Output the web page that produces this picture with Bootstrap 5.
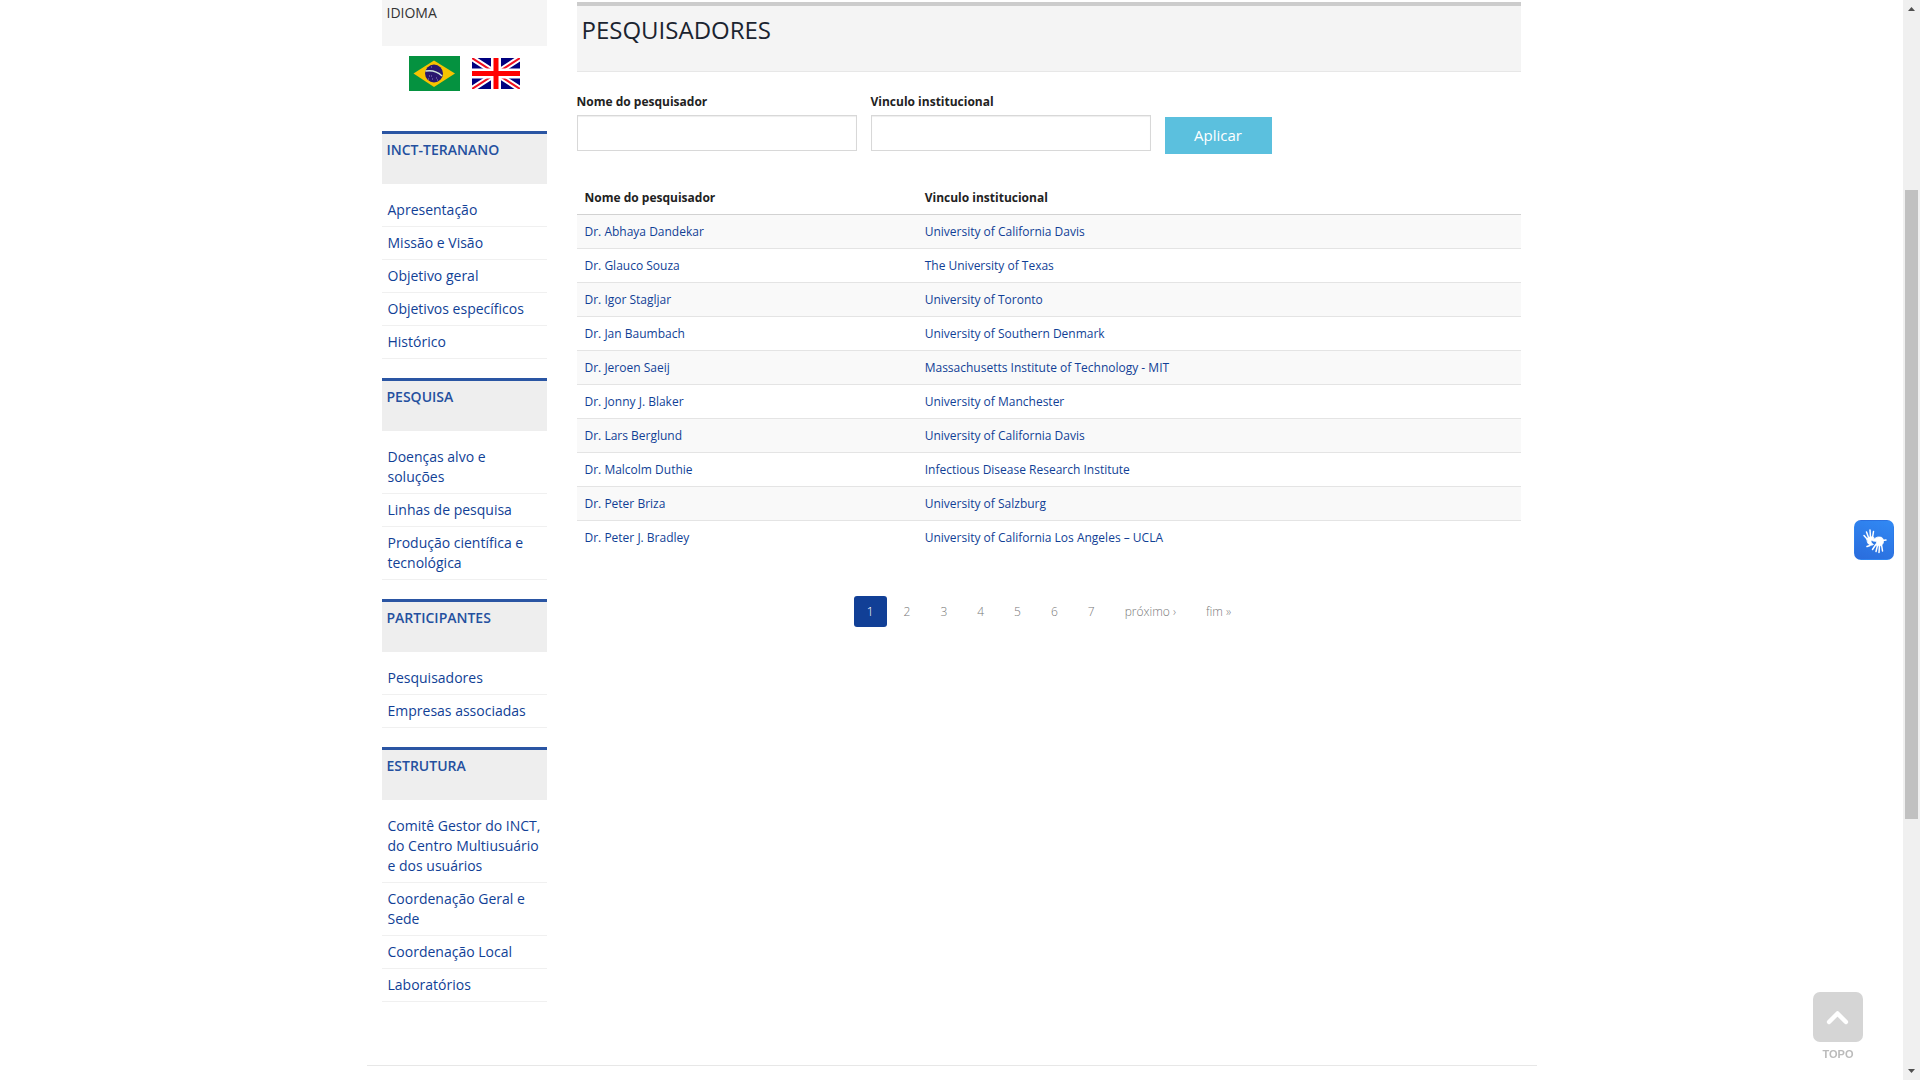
<!DOCTYPE html>
<html lang="pt-BR">
<head>
<meta charset="utf-8">
<meta name="viewport" content="width=device-width, initial-scale=1">
<title>Pesquisadores | INCT-TeraNano</title>
<link href="https://cdn.jsdelivr.net/npm/bootstrap@5.3.0/dist/css/bootstrap.min.css" rel="stylesheet">
<style>
  :root { --brand: #113f96; }
  html { overflow: hidden; }
  body { font-family: "Open Sans", sans-serif; font-size: 12px; line-height: 17px; color: #222; padding-right: 17px; }
  a { color: var(--brand); text-decoration: none; }
  .site-wrap { max-width: 1170px; border-bottom: 1px solid #e7e7e7; padding-bottom: 63px; }
  .side-col { flex: 0 0 195px; padding: 0 15px; }
  .main-col { min-width: 0; padding: 2px 15px 0; }
  .lang-head { background: #f5f5f5; height: 46px; padding: 3px 5px; font-size: 14px; line-height: 20px; font-weight: 400; color: #333; }
  .flag-row { gap: 12px; padding-top: 10px; margin-bottom: 40px; }
  .side-head { background: #eee; border-top: 3px solid #2a55a3; height: 53px; padding: 6px 5px; font-size: 14px; line-height: 20px; font-weight: 600; color: #24509f; }
  .side-menu { padding-top: 10px; margin-bottom: 19px; font-size: 14px; line-height: 20px; }
  .side-menu li { border-bottom: 1px solid #f0f0f0; }
  .side-menu a { display: block; padding: 6px 5px 6px 6px; }
  .page-title { background: #f4f4f4; border-top: 4px solid #ccc; border-bottom: 1px solid #e7e7e7; height: 70px; padding: 8px 5px; font-size: 24px; line-height: 32px; font-weight: 400; color: #1b2430; }
  .filter-form { gap: 14px; padding-top: 22px; margin-bottom: 27px; }
  .filter-form label { font-weight: 700; line-height: 16px; margin-bottom: 5px; }
  .filter-form .form-control { width: 280px; height: 36px; border: 1px solid #d8d8d8; border-radius: 0; box-shadow: inset 0 1px 1px #eee; }
  .apply-btn { width: 107px; height: 37px; margin-top: 23px; border-radius: 0; background: #5bc0de; color: #fff; font-size: 15px; line-height: 20px; padding: 0 0 2px; }
  .people { --bs-table-striped-bg: #f9f9f9; margin-bottom: 41px; table-layout: fixed; }
  .people th, .people td { padding: 8px; border-bottom: 1px solid #e4e4e4; color: #222; }
  .people thead th { border-bottom-color: #d2d2d2; font-weight: 700; }
  .people tbody tr:last-child td { border-bottom-color: transparent; }
  .people th:first-child { width: 36%; }
  .pager { gap: 5px; }
  .pager .page-link { border: 0; border-radius: 3px; padding: 7px 13px; font-size: 12px; line-height: 17px; font-weight: 300; color: #777; background: none; }
  .pager .active .page-link { background: var(--brand); color: #fff; border-radius: 3px; }
  .libras-btn { right: 26px; top: 520px; width: 40px; height: 40px; border-radius: 7px; background: linear-gradient(200deg, #3189f4, #2a6cdc); padding: 0; }
  .to-top { right: 57px; bottom: 18px; width: 50px; font: 700 11px/16px "Liberation Sans", sans-serif; color: #bbb; }
  .to-top-box { width: 50px; height: 50px; border-radius: 7px; background: #d5d5d5; }
  .scroll-rail { width: 17px; background: #f0f0f0; }
  .scroll-thumb { left: 2px; right: 2px; top: 17.6%; height: 58.2%; background: #c1c1c1; }
</style>
<script src="https://cdn.jsdelivr.net/npm/bootstrap@5.3.0/dist/js/bootstrap.bundle.min.js"></script>
</head>
<body>
<div class="site-wrap d-flex mx-auto">
  <aside class="side-col">
    <h2 class="lang-head m-0">IDIOMA</h2>
    <div class="flag-row d-flex justify-content-center align-items-center">
      <a href="#" aria-label="Português"><svg class="d-block" width="51" height="35" viewBox="0 0 51 35"><path fill="#059240" d="M0 0h51v35H0z"/><path fill="#f8c300" d="M4.500 17.500 25 4.500l21 13-21 13.500z"/><circle cx="25" cy="17.500" r="9" fill="#29166f"/><path d="M16.500 15c6-1 12 .5 16.500 5" fill="none" stroke="#cfe5dc" stroke-width="1.500"/><path d="M20 20h1m2 3h1m3-1h1m-9 1h1m8 1h1m-7-4h1m-1-9h1" stroke="#8f86bb"/></svg></a>
      <a href="#" aria-label="English"><svg class="d-block" width="48" height="31" viewBox="0 0 48 31"><path fill="#00007f" d="M0 0h48v31H0z"/><path d="M0 0l48 31M48 0 0 31" stroke="#fff" stroke-width="6"/><path d="M0 0l48 31M48 0 0 31" stroke="#f01020" stroke-width="2"/><path d="M24 0v31M0 15.500h48" stroke="#fff" stroke-width="10"/><path d="M24 0v31M0 15.500h48" stroke="#f00" stroke-width="5"/></svg></a>
    </div>

    <h2 class="side-head m-0">INCT-TERANANO</h2>
    <ul class="side-menu list-unstyled">
      <li><a href="#">Apresentação</a></li>
      <li><a href="#">Missão e Visão</a></li>
      <li><a href="#">Objetivo geral</a></li>
      <li><a href="#">Objetivos específicos</a></li>
      <li><a href="#">Histórico</a></li>
    </ul>
    <h2 class="side-head m-0">PESQUISA</h2>
    <ul class="side-menu list-unstyled">
      <li><a href="#">Doenças alvo e soluções</a></li>
      <li><a href="#">Linhas de pesquisa</a></li>
      <li><a href="#">Produção científica e tecnológica</a></li>
    </ul>
    <h2 class="side-head m-0">PARTICIPANTES</h2>
    <ul class="side-menu list-unstyled">
      <li><a href="#">Pesquisadores</a></li>
      <li><a href="#">Empresas associadas</a></li>
    </ul>
    <h2 class="side-head m-0">ESTRUTURA</h2>
    <ul class="side-menu list-unstyled mb-0">
      <li><a href="#">Comitê Gestor do INCT, do Centro Multiusuário e dos usuários</a></li>
      <li><a href="#">Coordenação Geral e Sede</a></li>
      <li><a href="#">Coordenação Local</a></li>
      <li><a href="#">Laboratórios</a></li>
    </ul>
  </aside>

  <main class="main-col flex-grow-1">
    <h1 class="page-title m-0">PESQUISADORES</h1>
    <form class="filter-form d-flex align-items-start">
      <div><label class="d-block" for="nome">Nome do pesquisador</label><input class="form-control" type="text" id="nome"></div>
      <div><label class="d-block" for="vinculo">Vinculo institucional</label><input class="form-control" type="text" id="vinculo"></div>
      <button type="button" class="btn apply-btn">Aplicar</button>
    </form>
    <table class="table table-striped people">
      <thead><tr><th scope="col">Nome do pesquisador</th><th scope="col">Vinculo institucional</th></tr></thead>
      <tbody>
        <tr><td><a href="#">Dr. Abhaya Dandekar</a></td><td><a href="#">University of California Davis</a></td></tr>
        <tr><td><a href="#">Dr. Glauco Souza</a></td><td><a href="#">The University of Texas</a></td></tr>
        <tr><td><a href="#">Dr. Igor Stagljar</a></td><td><a href="#">University of Toronto</a></td></tr>
        <tr><td><a href="#">Dr. Jan Baumbach</a></td><td><a href="#">University of Southern Denmark</a></td></tr>
        <tr><td><a href="#">Dr. Jeroen Saeij</a></td><td><a href="#">Massachusetts Institute of Technology - MIT</a></td></tr>
        <tr><td><a href="#">Dr. Jonny J. Blaker</a></td><td><a href="#">University of Manchester</a></td></tr>
        <tr><td><a href="#">Dr. Lars Berglund</a></td><td><a href="#">University of California Davis</a></td></tr>
        <tr><td><a href="#">Dr. Malcolm Duthie</a></td><td><a href="#">Infectious Disease Research Institute</a></td></tr>
        <tr><td><a href="#">Dr. Peter Briza</a></td><td><a href="#">University of Salzburg</a></td></tr>
        <tr><td><a href="#">Dr. Peter J. Bradley</a></td><td><a href="#">University of California Los Angeles – UCLA</a></td></tr>
      </tbody>
    </table>
    <nav aria-label="Paginação">
      <ul class="pagination pager justify-content-center">
        <li class="page-item active"><a class="page-link" href="#">1</a></li>
        <li class="page-item"><a class="page-link" href="#">2</a></li>
        <li class="page-item"><a class="page-link" href="#">3</a></li>
        <li class="page-item"><a class="page-link" href="#">4</a></li>
        <li class="page-item"><a class="page-link" href="#">5</a></li>
        <li class="page-item"><a class="page-link" href="#">6</a></li>
        <li class="page-item"><a class="page-link" href="#">7</a></li>
        <li class="page-item"><a class="page-link" href="#">próximo ›</a></li>
        <li class="page-item"><a class="page-link" href="#">fim »</a></li>
      </ul>
    </nav>
  </main>
</div>

<button type="button" class="btn libras-btn position-fixed" aria-label="Libras">
  <svg class="d-block" width="40" height="40" viewBox="0 0 40 40" fill="none" stroke="#fff" stroke-linecap="round" stroke-linejoin="round">
    <path d="M12.500 18.500 9 14.500M13.500 16.500l-2-5.500M15.500 16l-.5-7M17.500 16.500l1-6" stroke-width="1.500"/>
    <path d="M12 17.500c2-2 5-2 7-1l-1 2.500c-2 0-2.500 1.500-1.500 3l2 1.500c-2 1.500-5 .5-6-2z" fill="#fff" stroke-width=".8"/>
    <path d="M12 25.500l3-1" stroke-width="1.500"/>
    <path d="M18 18.500c2-1 4-3 6.500-2.500 3 0 4 2 4 4.500s-2 4-4 4.500l-4-1 1.500-3.500-4-.5z" fill="#fff" stroke-width=".8"/>
    <path d="M20.500 24l-3 4.500M22.500 24.500l-1.500 6M24.500 24.500l-.5 7M26.500 23.500l1 6.500M27.500 19.500l3.500-.5" stroke-width="1.500"/>
  </svg>
</button>
<a href="#" class="to-top position-fixed text-center">
  <span class="to-top-box d-block"><svg class="d-block" width="50" height="50" viewBox="0 0 50 50"><path d="m16 30 8.500-8.500L33 30" fill="none" stroke="#fff" stroke-width="4.500" stroke-linecap="round" stroke-linejoin="round"/></svg></span>
  <span class="d-block pt-1">TOPO</span>
</a>
<div class="scroll-rail position-fixed top-0 bottom-0 end-0 d-flex flex-column justify-content-between align-items-center" aria-hidden="true">
  <svg width="17" height="17" viewBox="0 0 17 17"><path d="M5 11 8.500 7 12 11z" fill="#505050"/></svg>
  <div class="scroll-thumb position-absolute"></div>
  <svg width="17" height="17" viewBox="0 0 17 17"><path d="M5 6h7l-3.500 4z" fill="#505050"/></svg>
</div>
</body>
</html>
